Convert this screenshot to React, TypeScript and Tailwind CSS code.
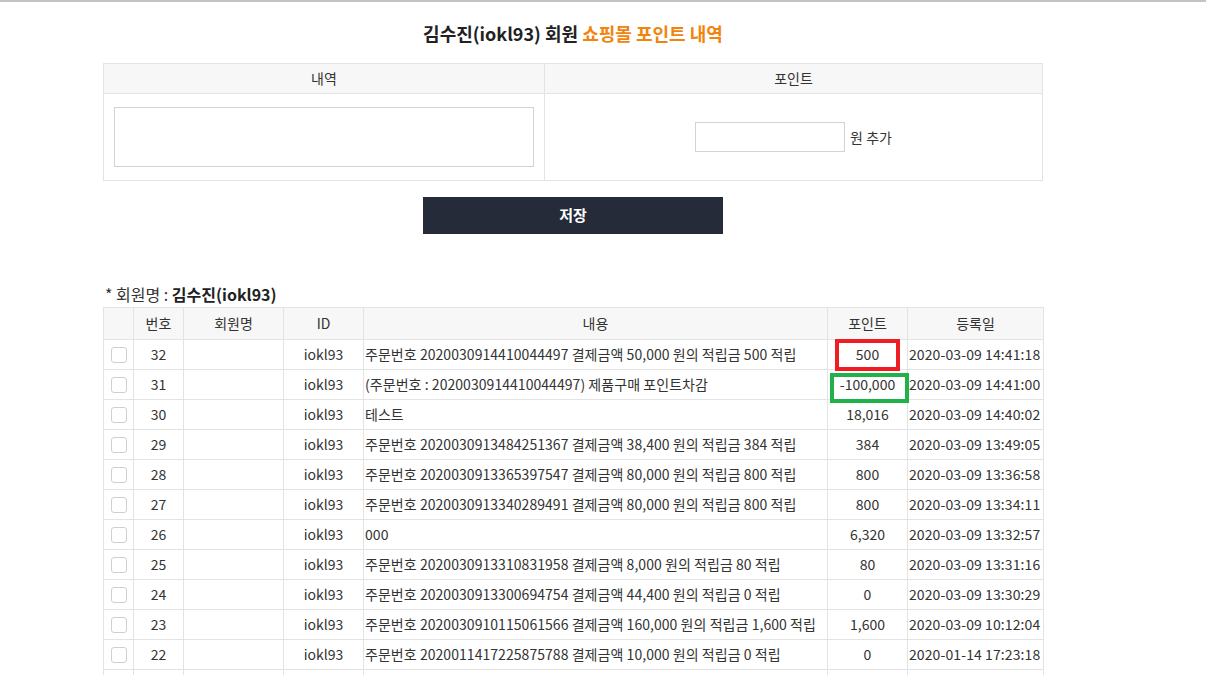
import React from 'react';

type PointRow = {
  no: number;
  id: string;
  memo: string;
  point: string;
  date: string;
  mark?: 'red' | 'green';
};

const rows: PointRow[] = [
  { no: 32, id: 'iokl93', memo: '주문번호 2020030914410044497 결제금액 50,000 원의 적립금 500 적립', point: '500', date: '2020-03-09 14:41:18', mark: 'red' },
  { no: 31, id: 'iokl93', memo: '(주문번호 : 2020030914410044497) 제품구매 포인트차감', point: '-100,000', date: '2020-03-09 14:41:00', mark: 'green' },
  { no: 30, id: 'iokl93', memo: '테스트', point: '18,016', date: '2020-03-09 14:40:02' },
  { no: 29, id: 'iokl93', memo: '주문번호 2020030913484251367 결제금액 38,400 원의 적립금 384 적립', point: '384', date: '2020-03-09 13:49:05' },
  { no: 28, id: 'iokl93', memo: '주문번호 2020030913365397547 결제금액 80,000 원의 적립금 800 적립', point: '800', date: '2020-03-09 13:36:58' },
  { no: 27, id: 'iokl93', memo: '주문번호 2020030913340289491 결제금액 80,000 원의 적립금 800 적립', point: '800', date: '2020-03-09 13:34:11' },
  { no: 26, id: 'iokl93', memo: '000', point: '6,320', date: '2020-03-09 13:32:57' },
  { no: 25, id: 'iokl93', memo: '주문번호 2020030913310831958 결제금액 8,000 원의 적립금 80 적립', point: '80', date: '2020-03-09 13:31:16' },
  { no: 24, id: 'iokl93', memo: '주문번호 2020030913300694754 결제금액 44,400 원의 적립금 0 적립', point: '0', date: '2020-03-09 13:30:29' },
  { no: 23, id: 'iokl93', memo: '주문번호 2020030910115061566 결제금액 160,000 원의 적립금 1,600 적립', point: '1,600', date: '2020-03-09 10:12:04' },
  { no: 22, id: 'iokl93', memo: '주문번호 2020011417225875788 결제금액 10,000 원의 적립금 0 적립', point: '0', date: '2020-01-14 17:23:18' },
];

const th = 'border border-[#e3e3e3] bg-[#f7f7f7] font-normal text-[14px] text-[#333]';
const td = 'border border-[#e3e3e3] h-[30px] p-0 text-[14px] text-[#333]';

export default function App() {
  return (
    <div
      className="min-h-screen bg-white border-t-2 border-[#c4c4c4] overflow-hidden"
      style={{ fontFamily: '"Noto Sans CJK KR", "Noto Sans", sans-serif' }}
    >
      <div className="ml-[103px] w-[940px]">
        <h1 className="pt-[18px] h-[61px] text-center text-[18px] font-bold text-[#222] leading-[26px]">
          김수진(iokl93) 회원 <span className="text-[#f0840c]">쇼핑몰 포인트 내역</span>
        </h1>

        {/* add point form */}
        <table className="w-full border-collapse">
          <colgroup>
            <col className="w-[441px]" />
            <col />
          </colgroup>
          <thead>
            <tr className="h-[30px]">
              <th className={th}>내역</th>
              <th className={th}>포인트</th>
            </tr>
          </thead>
          <tbody>
            <tr className="h-[87px]">
              <td className="border border-[#e3e3e3] px-[10px]">
                <textarea className="block w-[420px] h-[60px] border border-[#d4d4cf] resize-none outline-none" />
              </td>
              <td className="border border-[#e3e3e3]">
                <div className="flex items-center justify-center gap-[5px] text-[14px] text-[#333]">
                  <input type="text" className="w-[150px] h-[30px] border border-[#d4d4cf] outline-none" />
                  <span>원 추가</span>
                </div>
              </td>
            </tr>
          </tbody>
        </table>

        <div className="flex justify-center pt-[16px]">
          <button className="w-[300px] h-[37px] bg-[#252b38] text-white text-[15px] font-bold">저장</button>
        </div>

        <p className="mt-[48px] pl-[2px] text-[16px] text-[#333] leading-[25px]">
          * 회원명 : <b className="text-[#222]">김수진(iokl93)</b>
        </p>

        {/* point history list */}
        <table className="w-full border-collapse table-fixed">
          <colgroup>
            <col className="w-[30px]" />
            <col className="w-[50px]" />
            <col className="w-[100px]" />
            <col className="w-[80px]" />
            <col className="w-[464px]" />
            <col className="w-[80px]" />
            <col className="w-[136px]" />
          </colgroup>
          <thead>
            <tr className="h-[32px]">
              <th className={th}></th>
              <th className={th}>번호</th>
              <th className={th}>회원명</th>
              <th className={th}>ID</th>
              <th className={th}>내용</th>
              <th className={th}>포인트</th>
              <th className={th}>등록일</th>
            </tr>
          </thead>
          <tbody>
            {rows.map((r) => (
              <tr key={r.no}>
                <td className={td}>
                  <div className="flex justify-center">
                    <span className="block w-[16px] h-[16px] rounded-[3px] border border-[#cfcfcf] bg-white" />
                  </div>
                </td>
                <td className={`${td} text-center`}>{r.no}</td>
                <td className={td}></td>
                <td className={`${td} text-center`}>{r.id}</td>
                <td className={`${td} pl-[1px] whitespace-nowrap overflow-hidden tracking-[0.05px]`}>{r.memo}</td>
                <td className={`${td} text-center relative`}>
                  {r.point}
                  {r.mark === 'red' && (
                    <span className="absolute left-[7px] right-[7px] top-[-1px] bottom-[-2px] border-[4px] border-[#ee1c23]" />
                  )}
                  {r.mark === 'green' && (
                    <span className="absolute left-[2px] right-[-2px] top-[3px] bottom-[-4px] border-[4px] border-[#21b14b]" />
                  )}
                </td>
                <td className={`${td} whitespace-nowrap pl-[1px] tracking-[0.1px]`}>{r.date}</td>
              </tr>
            ))}
            <tr>
              <td className={td}></td>
              <td className={td}></td>
              <td className={td}></td>
              <td className={td}></td>
              <td className={td}></td>
              <td className={td}></td>
              <td className={td}></td>
            </tr>
          </tbody>
        </table>
      </div>
    </div>
  );
}
